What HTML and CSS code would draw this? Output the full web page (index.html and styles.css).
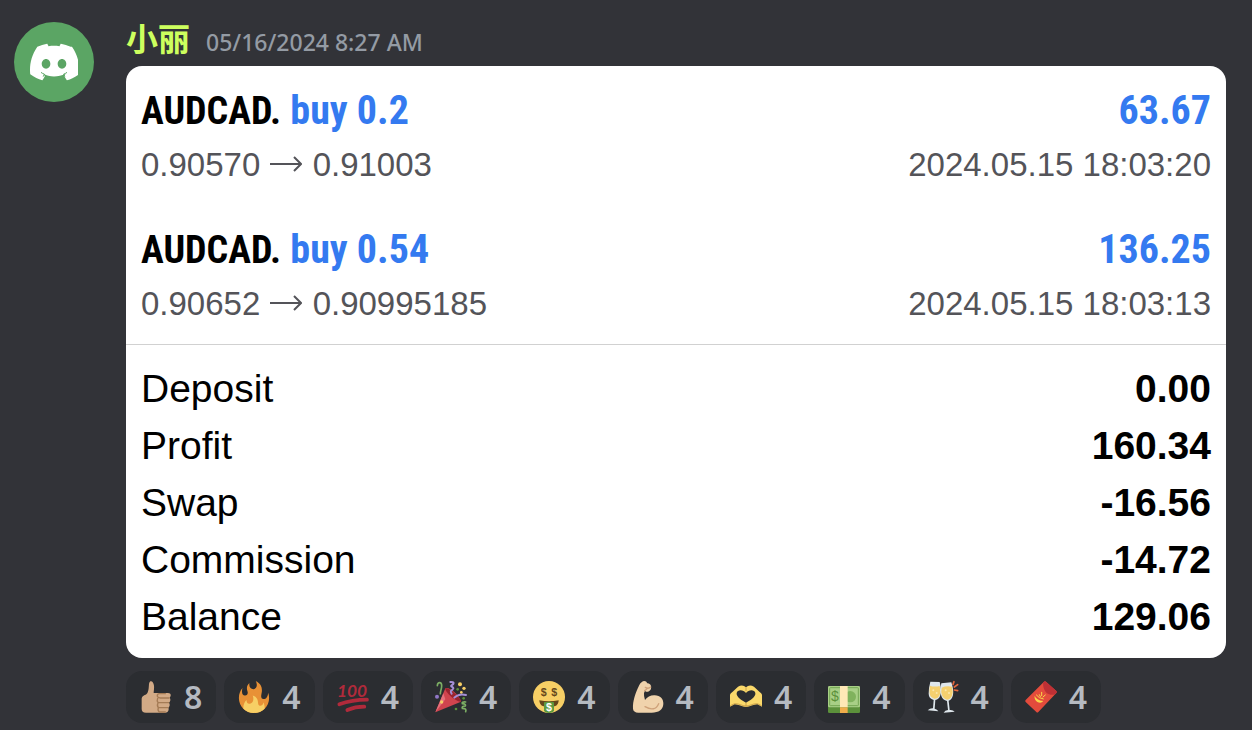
FILE: index.html
```html
<!DOCTYPE html>
<html lang="en">

<head>
    <meta charset="utf-8">
    <title>Chat Message</title>
    <link rel="stylesheet" href="styles.css">
</head>

<body>
    <article class="message">
        <!-- Avatar -->
        <div class="avatar">
            <svg class="avatar-logo" viewBox="0 0 24 24" aria-hidden="true">
                <path fill="#fff" d="M20.317 4.37a19.79 19.79 0 0 0-4.885-1.515.074.074 0 0 0-.079.037c-.21.375-.444.864-.608 1.25-1.845-.277-3.68-.277-5.487 0-.163-.394-.405-.875-.617-1.25a.077.077 0 0 0-.079-.037A19.74 19.74 0 0 0 3.677 4.37a.07.07 0 0 0-.032.028C.533 9.046-.319 13.58.099 18.058a.082.082 0 0 0 .031.056c2.053 1.508 4.041 2.423 5.993 3.03a.078.078 0 0 0 .084-.028c.462-.63.873-1.295 1.226-1.994l-.6-1.2C8.2 18.8 10 19.2 12 19.2s3.8-.4 5.8-1.28l-.6 1.2c.36.698.772 1.363 1.225 1.993a.076.076 0 0 0 .084.029c1.961-.607 3.95-1.522 6.002-3.03a.077.077 0 0 0 .032-.055c.5-5.177-.838-9.674-3.549-13.66a.061.061 0 0 0-.031-.029zM8.02 15.331c-1.183 0-2.157-1.086-2.157-2.419s.956-2.419 2.157-2.419c1.21 0 2.176 1.095 2.157 2.419 0 1.333-.956 2.419-2.157 2.419zm7.975 0c-1.183 0-2.157-1.086-2.157-2.419s.955-2.419 2.157-2.419c1.21 0 2.176 1.095 2.157 2.419 0 1.333-.946 2.419-2.157 2.419z"/>
                <path fill="none" stroke="#5ba564" stroke-width=".5" d="M5.5 17.2Q6.3 17.8 7.2 18.1L6.6 19.3M18.5 17.2Q17.7 17.8 16.8 18.1L17.4 19.3"/>
            </svg>
        </div>

        <div class="content">
            <header class="message-header">
                <span class="username" lang="zh-CN">小丽</span>
                <time class="timestamp" datetime="2024-05-16T08:27">05/16/2024 8:27 AM</time>
            </header>

            <!-- Trading history -->
            <section class="card">
                <div class="trade">
                    <div class="trade-row trade-title">
                        <span><span class="symbol">AUDCAD.</span> <span class="blue">buy 0.2</span></span>
                        <span class="blue">63.67</span>
                    </div>
                    <div class="trade-row trade-detail">
                        <span>0.90570 <svg class="arrow" viewBox="0 0 32 24" role="img" aria-label="to"><path d="M0 12H31M24 5L31 12L24 19"/></svg> 0.91003</span>
                        <span>2024.05.15 18:03:20</span>
                    </div>
                </div>
                <div class="trade">
                    <div class="trade-row trade-title">
                        <span><span class="symbol">AUDCAD.</span> <span class="blue">buy 0.54</span></span>
                        <span class="blue">136.25</span>
                    </div>
                    <div class="trade-row trade-detail">
                        <span>0.90652 <svg class="arrow" viewBox="0 0 32 24" role="img" aria-label="to"><path d="M0 12H31M24 5L31 12L24 19"/></svg> 0.90995185</span>
                        <span>2024.05.15 18:03:13</span>
                    </div>
                </div>

                <div class="summary">
                    <table>
                        <tbody>
                            <tr><th scope="row">Deposit</th><td>0.00</td></tr>
                            <tr><th scope="row">Profit</th><td>160.34</td></tr>
                            <tr><th scope="row">Swap</th><td>-16.56</td></tr>
                            <tr><th scope="row">Commission</th><td>-14.72</td></tr>
                            <tr><th scope="row">Balance</th><td>129.06</td></tr>
                        </tbody>
                    </table>
                </div>
            </section>

            <!-- Reactions -->
            <div class="reactions">
                <button type="button" class="reaction" aria-label="Thumbs up, 8">
                    <svg class="emoji" viewBox="0 0 96 96">
                        <path fill="#d2aa86" d="M31 1C36-1 41 5 42 14C43 23 41 29 41 36L84 36C94 36 94 46 89 50C93 55 91 62 87 65C91 70 89 77 85 80C88 86 84 95 76 95L18 95C9 95 5 91 5 84L5 55C5 46 13 43 19 40C26 34 26 22 27 9Q28 3 31 1Z"/>
                        <path fill="none" stroke="#a47b55" stroke-width="4" stroke-linecap="round" stroke-linejoin="round" d="M76 38H57Q51 39 52 46Q54 51 61 51H87M53 52Q50 59 54 65H86M54 66Q50 74 55 80H84M55 81Q52 88 58 93H76"/>
                    </svg>
                    <span>8</span>
                </button>
                <button type="button" class="reaction" aria-label="Fire, 4">
                    <svg class="emoji" viewBox="0 0 36 36">
                        <path fill="#e89136" d="M35 19c0-2.062-.367-4.039-1.04-5.868-.46 5.389-3.333 8.157-6.335 6.868-2.812-1.208-.917-5.917-.777-8.164.236-3.809-.012-8.169-6.931-11.794 2.875 5.5.333 8.917-2.333 9.125-2.958.231-5.667-2.542-4.667-7.042-3.238 2.386-3.332 6.402-2.333 9 1.042 2.708-.042 4.958-2.583 5.208-2.84.28-4.418-3.041-2.963-8.333C2.52 10.965 1 14.805 1 19c0 9.389 7.611 17 17 17s17-7.611 17-17z"/>
                        <path fill="#f7cf65" d="M28.394 23.999c.148 3.084-2.561 4.293-4.019 3.709-2.106-.843-1.541-2.291-2.083-5.291s-2.625-5.083-5.708-6c2.25 6.333-1.247 8.667-3.08 9.084-1.872.426-3.753-.001-3.968-4.007C7.352 23.668 6 26.676 6 30c0 .368.023.73.055 1.09C9.125 34.124 13.342 36 18 36s8.875-1.876 11.945-4.91c.032-.36.055-.722.055-1.09 0-2.187-.584-4.236-1.606-6.001z"/>
                    </svg>
                    <span>4</span>
                </button>
                <button type="button" class="reaction" aria-label="Hundred, 4">
                    <svg class="emoji" viewBox="0 0 96 96">
                        <text class="hundred" x="0" y="49">100</text>
                        <path fill="none" stroke="#b12a3b" stroke-width="11" stroke-linecap="round" d="M7 70Q45 56 90 56M31 87Q55 77 82 77"/>
                    </svg>
                    <span>4</span>
                </button>
                <button type="button" class="reaction" aria-label="Party popper, 4">
                    <svg class="emoji" viewBox="0 0 96 96">
                        <path fill="#d0444e" d="M1 94L31 22Q39 17 58 33Q76 50 78 62Z"/>
                        <path fill="#e5717c" d="M1 94L25 37L31 55Z"/>
                        <path fill="#99232f" d="M31 22C42 17 78 51 78 62C67 66 29 34 31 22Z"/>
                        <path fill="none" stroke="#7cae64" stroke-width="5" stroke-linecap="round" d="M7 14C8 2 20 2 20 14C20 24 16 30 16 38M92 63Q79 62 82 68Q94 69 91 75Q79 76 82 82Q96 82 92 92"/>
                        <path fill="none" stroke="#a58fd6" stroke-width="6" stroke-linecap="round" d="M46 3C60 2 57 9 50 13C43 18 61 18 53 25C48 31 44 28 50 38M58 50Q72 36 93 42"/>
                        <circle cx="6" cy="47" r="6" fill="#9178c7"/>
                        <circle cx="75" cy="10" r="6" fill="#f7cf65"/>
                        <circle cx="87" cy="22" r="5" fill="#f7cf65"/>
                        <circle cx="79" cy="34" r="4" fill="#f7cf65"/>
                        <circle cx="20" cy="63" r="5" fill="#f7cf65"/>
                        <circle cx="68" cy="25" r="4" fill="#5c913b"/>
                        <circle cx="86" cy="52" r="4" fill="#5c913b"/>
                        <circle cx="63" cy="84" r="4" fill="#5c913b"/>
                    </svg>
                    <span>4</span>
                </button>
                <button type="button" class="reaction" aria-label="Money face, 4">
                    <svg class="emoji" viewBox="0 0 96 96">
                        <circle cx="48" cy="48" r="48" fill="#f7cf65"/>
                        <path fill="#65471b" d="M19 58Q48 64 77 58Q77 72 65 76H31Q19 72 19 58Z"/>
                        <path fill="#5e9a3f" d="M33 64Q48 60 63 64V88Q61 96 48 96Q35 96 33 88Z"/>
                        <text class="dollar" fill="#65471b" x="32" y="46">$</text>
                        <text class="dollar" fill="#65471b" x="64" y="46">$</text>
                        <text class="dollar" fill="#fff" x="48" y="90">$</text>
                    </svg>
                    <span>4</span>
                </button>
                <button type="button" class="reaction" aria-label="Flexed biceps, 4">
                    <svg class="emoji" viewBox="0 0 96 96">
                        <path fill="#f0d3ac" d="M22 12Q28 1 37 0Q43 0 46 7Q56 8 57 16Q59 26 51 31Q43 35 39 29L36 36Q35 46 39 57Q49 43 66 43C84 42 95 54 94 69C93 86 80 95 59 95H19Q4 94 3 83C2 60 10 36 22 12Z"/>
                        <path fill="none" stroke="#cfa27a" stroke-width="4" stroke-linecap="round" d="M39 77Q69 94 80 68M40 19Q49 25 56 18M38 29Q43 26 45 23"/>
                    </svg>
                    <span>4</span>
                </button>
                <button type="button" class="reaction" aria-label="Heart hands, 4">
                    <svg class="emoji" viewBox="0 0 96 96">
                        <path fill="#fbd96b" fill-rule="evenodd" d="M0 77V41Q1 36 8 32L24 17Q38 9 48 19Q58 9 72 17L88 32Q95 36 96 41V77L82 70C70 70 60 78 48 78C36 78 26 70 14 70ZM48 65C60 58 78 48 76 36C74 25 56 25 48 36C40 25 22 25 20 36C18 48 36 58 48 65Z"/>
                        <path fill="none" stroke="#b8893b" stroke-width="2" d="M48 19V31M48 66V77M1 74L14 68C27 67 36 75 48 75C60 75 69 67 82 68L95 74"/>
                    </svg>
                    <span>4</span>
                </button>
                <button type="button" class="reaction" aria-label="Cash, 4">
                    <svg class="emoji" viewBox="0 0 96 96">
                        <rect y="72" width="96" height="24" rx="4" fill="#5c913b"/>
                        <rect y="15" width="96" height="64" rx="4" fill="#a8cf86"/>
                        <rect x="5" y="20" width="86" height="54" rx="2" fill="none" stroke="#75a654" stroke-width="3"/>
                        <circle cx="67" cy="47" r="17" fill="#80b25d"/>
                        <text class="dollar cash" fill="#5c913b" x="21" y="61">$</text>
                        <path fill="#ffe8b6" d="M36 15H59V79H36Z"/>
                        <path fill="#f0ad4b" d="M36 79H59V96H36Z"/>
                    </svg>
                    <span>4</span>
                </button>
                <button type="button" class="reaction" aria-label="Clinking glasses, 4">
                    <svg class="emoji" viewBox="0 0 96 96">
                        <path fill="#dfe7ec" d="M10 2L38 3Q45 29 40 43Q36 56 25 57L23 83Q31 85 34 91L2 88Q10 81 18 82L20 57Q5 52 5 38Q5 20 10 2Z"/>
                        <path fill="#f5d06f" d="M9 14Q21 19 38 15Q42 34 37 44Q32 54 22 53Q9 50 8 37Q7 26 9 14Z"/>
                        <path fill="#dfe7ec" d="M43 7L73 4Q81 28 78 42Q75 56 65 59L68 87Q78 86 83 92L50 95Q54 87 63 87L60 60Q47 57 43 45Q38 30 43 7Z"/>
                        <path fill="#f5d06f" d="M44 20Q57 14 75 17Q79 32 75 44Q69 56 60 56Q48 53 45 43Q41 33 44 20Z"/>
                        <path fill="none" stroke="#e2673d" stroke-width="5" stroke-linecap="round" d="M78 10L81 2M82 18L92 11M82 27L92 29"/>
                        <g fill="#fbe8ad"><circle cx="19" cy="28" r="3"/><circle cx="29" cy="36" r="3"/><circle cx="56" cy="28" r="3"/><circle cx="66" cy="36" r="3"/></g>
                    </svg>
                    <span>4</span>
                </button>
                <button type="button" class="reaction" aria-label="Red envelope, 4">
                    <svg class="emoji" viewBox="0 0 96 96">
                        <path fill="#e34b3c" d="M57 2Q60-1 63 2L94 30Q97 33 94 36L40 93Q37 96 34 93L2 63Q-1 60 2 57Z"/>
                        <path fill="#be3035" d="M57 2Q60-1 63 2L94 30Q97 33 94 36L89 41Q55 45 54 5Z"/>
                        <path fill="#f9d64a" d="M29 44Q34 57 55 60Q48 69 37 63Q27 56 29 44Z"/>
                        <path fill="none" stroke="#f9d64a" stroke-width="3" stroke-linecap="round" d="M34 42Q41 52 55 54M43 41L46 47M50 34L50 44M61 42L54 48"/>
                    </svg>
                    <span>4</span>
                </button>
            </div>
        </div>
    </article>
</body>

</html>
```
FILE: styles.css
```css
/* Basic styling for the body */
body {
    margin: 0;
    background-color: #323338;
    font-family: "Noto Sans", sans-serif;
}

/* Message layout */
.message {
    display: flex;
    gap: 32px;
    padding: 18px 26px 7px 14px;
}

.avatar {
    display: flex;
    flex: none;
    align-items: center;
    justify-content: center;
    width: 80px;
    height: 80px;
    margin-top: 4px;
    border-radius: 50%;
    background-color: #5ba564;
}

.avatar-logo {
    width: 48px;
    height: 48px;
}

.content {
    flex: 1;
    min-width: 0;
}

.message-header {
    display: flex;
    align-items: baseline;
    gap: 16px;
    height: 48px;
    line-height: 38px;
}

.username {
    color: #cdff5e;
    font-family: "Noto Sans CJK SC", sans-serif;
    font-size: 32px;
    font-weight: 700;
}

.timestamp {
    color: #949ba4;
    font-size: 23px;
    font-weight: 500;
}

/* White card with the trades */
.card {
    overflow: hidden;
    border-radius: 16px;
    background-color: #fff;
    color: #000;
    font-family: "Liberation Sans", Arial, sans-serif;
}

.trade {
    padding: 17px 15px 14px;
}

.trade-row {
    display: flex;
    justify-content: space-between;
}

.trade-title {
    font-family: "Roboto Condensed", "Liberation Sans Narrow", "Arial Narrow", sans-serif;
    font-size: 40px;
    font-weight: 700;
    line-height: 56px;
}

.symbol {
    font-size: 38px;
}

.trade-detail {
    color: #545459;
    font-size: 33px;
    line-height: 52px;
}

.blue {
    color: #347af0;
}

.arrow {
    width: 32px;
    height: 24px;
    margin: 0 1px;
    fill: none;
    stroke: #545459;
    stroke-width: 2;
}

/* Account totals */
.summary {
    padding: 15px 15px 13px;
    border-top: 1px solid #d1d1d1;
}

.summary table {
    width: 100%;
    border-collapse: collapse;
    font-size: 39px;
    line-height: 57px;
}

.summary th,
.summary td {
    padding: 0;
}

.summary th {
    font-weight: 400;
    text-align: left;
}

.summary td {
    font-weight: 700;
    text-align: right;
}

/* Reaction buttons */
.reactions {
    display: flex;
    flex-wrap: wrap;
    gap: 8px;
    margin-top: 13px;
}

.reaction {
    display: flex;
    align-items: center;
    gap: 12px;
    height: 52px;
    padding: 0 14px;
    border: none;
    border-radius: 16px;
    background-color: #2b2d31;
    color: #b5bac1;
    font-family: "Noto Sans", sans-serif;
    font-size: 32px;
    font-weight: 600;
    line-height: 52px;
    cursor: pointer;
}

.reaction:hover {
    background-color: #383a40;
}

.emoji {
    width: 32px;
    height: 32px;
    overflow: visible;
}

.hundred {
    fill: #b12a3b;
    font: italic 700 52px Lato, sans-serif;
}

.dollar {
    font: 700 32px "Liberation Sans", sans-serif;
    text-anchor: middle;
}

.cash {
    font-size: 42px;
    font-weight: 400;
}
```
